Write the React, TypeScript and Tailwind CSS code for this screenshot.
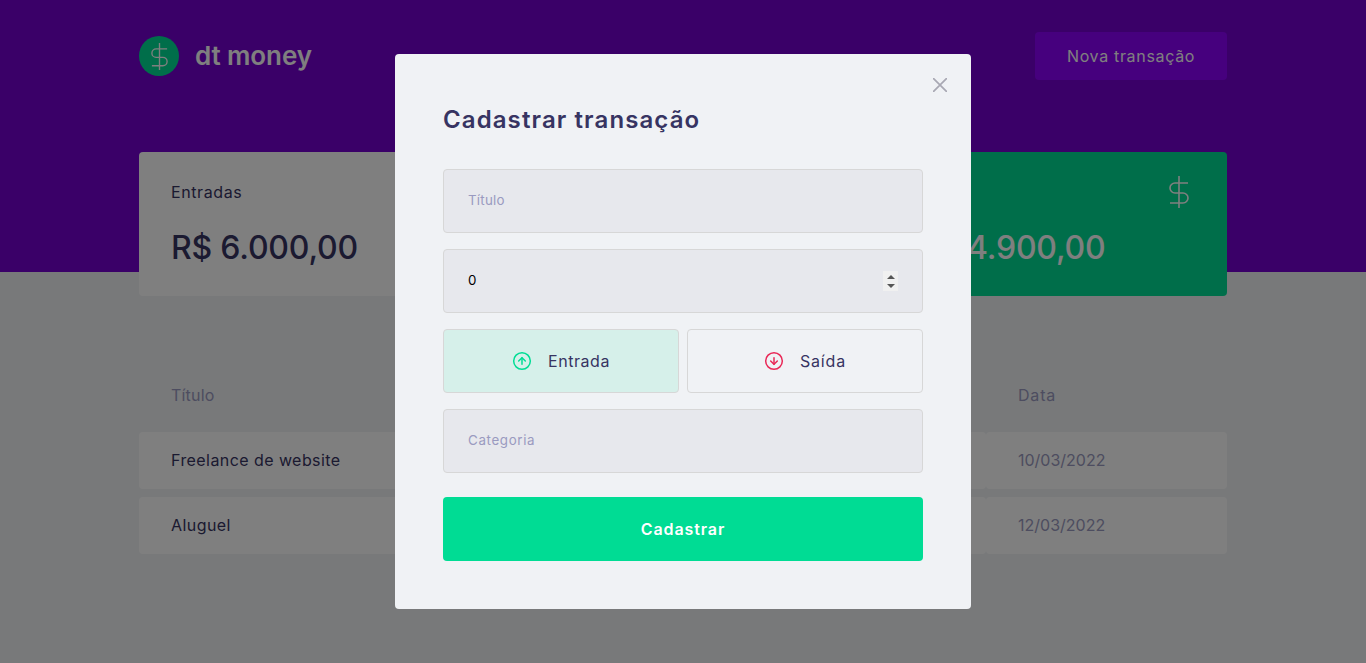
import { CircleArrowDown, CircleArrowUp } from 'lucide-react'

const font = { fontFamily: 'Inter, "Noto Sans", sans-serif' }

const DollarIcon = ({ className }: { className: string }) => (
    <svg viewBox="0 0 32 32" fill="none" stroke="currentColor" strokeWidth="1.6" className={className}>
        <path d="M16 0v32" />
        <path d="M25 7H12a5 5 0 0 0 0 10h8a5 5 0 0 1 0 10H7" />
    </svg>
)

const cards = [
    { title: 'Entradas', value: 'R$ 6.000,00', highlight: false },
    { title: 'Saídas', value: '- R$ 1.100,00', highlight: false },
    { title: 'Total', value: 'R$ 4.900,00', highlight: true },
]

const rows = [
    { title: 'Freelance de website', amount: 'R$ 6.000,00', category: 'Dev', date: '10/03/2022' },
    { title: 'Aluguel', amount: '- R$ 1.100,00', category: 'Casa', date: '12/03/2022' },
]

const inputClass =
    'block w-full h-16 px-6 pb-[2px] rounded border border-[#d7d7d7] bg-[#e7e8ed] text-[13.33px] text-black outline-none placeholder:text-[#9a9ac0]'

export default function App() {
    return (
        <div style={font} className="min-h-screen bg-[#f0f2f5] text-[16px] leading-6">
            <header className="h-[272px] bg-[#7400d0]">
                <div className="mx-auto flex max-w-[1088px] items-center justify-between pt-8">
                    <div className="flex items-center gap-4">
                        <div className="flex h-10 w-10 items-center justify-center rounded-full bg-[#00dd95] text-white">
                            <DollarIcon className="h-[27px] w-[27px]" />
                        </div>
                        <span className="text-[26px] font-semibold text-white tracking-[-0.1px]">dt money</span>
                    </div>
                    <button className="h-12 w-48 rounded bg-[#8c00fc] text-white tracking-[0.67px]">Nova transação</button>
                </div>
            </header>

            <main className="mx-auto -mt-[120px] max-w-[1088px]">
                <section className="grid grid-cols-3 gap-8">
                    {cards.map((card) => (
                        <div
                            key={card.title}
                            className={`rounded px-8 py-6 ${card.highlight ? 'bg-[#00dd95] text-white' : 'bg-white text-[#373462]'}`}
                        >
                            <header className="flex h-8 items-center justify-between">
                                <p className="tracking-[0.6px]">{card.title}</p>
                                {card.highlight && <DollarIcon className="h-8 w-8" />}
                            </header>
                            <strong className="mt-4 block text-[32px] leading-[48px] font-medium tracking-[-0.2px]">{card.value}</strong>
                        </div>
                    ))}
                </section>

                <table className="mt-16 w-full border-separate border-spacing-y-2">
                    <thead>
                        <tr className="text-left text-[#9a9ac0]">
                            <th className="px-8 pt-[15px] pb-[17px] font-normal tracking-[0.2px]">Título</th>
                            <th className="px-8 pt-[15px] pb-[17px] font-normal">Valor</th>
                            <th className="px-8 pt-[15px] pb-[17px] font-normal">Categoria</th>
                            <th className="w-[241px] px-8 pt-[15px] pb-[17px] font-normal tracking-[0.8px]">Data</th>
                        </tr>
                    </thead>
                    <tbody>
                        {rows.map((row) => (
                            <tr key={row.title} className="text-[#9a9ac0]">
                                <td className="h-[57px] rounded bg-white px-8 pb-[2px] tracking-[0.43px] text-[#373462]">{row.title}</td>
                                <td className="h-[57px] rounded bg-white px-8 pb-[2px]">{row.amount}</td>
                                <td className="h-[57px] rounded bg-white px-8 pb-[2px]">{row.category}</td>
                                <td className="h-[57px] rounded bg-white px-8 pb-[2px]">{row.date}</td>
                            </tr>
                        ))}
                    </tbody>
                </table>
            </main>

            {/* Modal */}
            <div className="fixed inset-0 flex items-center justify-center bg-black/50">
                <div className="relative w-[576px] rounded bg-[#f0f2f5] p-12">
                    <button className="absolute top-6 right-6 text-[#a8a8b3]">
                        <svg viewBox="0 0 14 14" fill="none" stroke="currentColor" strokeWidth="1.7" className="h-[14px] w-[14px]">
                            <path d="M0 0l14 14M14 0L0 14" />
                        </svg>
                    </button>

                    <h2 className="mb-8 text-[24px] leading-[35px] font-semibold tracking-[1.1px] text-[#373462]">Cadastrar transação</h2>

                    <input className={`${inputClass} tracking-[0.25px]`} placeholder="Título" />
                    <div className="relative mt-4">
                        <input className={inputClass} defaultValue="0" />
                        <div className="absolute top-[22px] right-[25px] flex h-5 w-[15px] flex-col items-center justify-center gap-[5px] bg-[#f0f0f0]">
                            <span className="h-0 w-0 border-x-4 border-b-4 border-x-transparent border-b-[#555]" />
                            <span className="h-0 w-0 border-x-4 border-t-4 border-x-transparent border-t-[#555]" />
                        </div>
                    </div>

                    <div className="my-4 grid grid-cols-2 gap-2">
                        <button className="flex h-16 items-center justify-center gap-4 rounded border border-[#d7d7d7] bg-[#d6f0ea] text-[#373462]">
                            <CircleArrowUp size={20} strokeWidth={1.8} className="text-[#00dd95]" />
                            <span className="tracking-[0.55px]">Entrada</span>
                        </button>
                        <button className="flex h-16 items-center justify-center gap-4 rounded border border-[#d7d7d7] text-[#373462]">
                            <CircleArrowDown size={20} strokeWidth={1.8} className="text-[#e92857]" />
                            <span className="tracking-[0.85px]">Saída</span>
                        </button>
                    </div>

                    <input className={`${inputClass} tracking-[0.65px]`} placeholder="Categoria" />

                    <button className="mt-6 block h-16 w-full rounded bg-[#00dc94] font-semibold tracking-[0.9px] text-white">Cadastrar</button>
                </div>
            </div>
        </div>
    )
}
